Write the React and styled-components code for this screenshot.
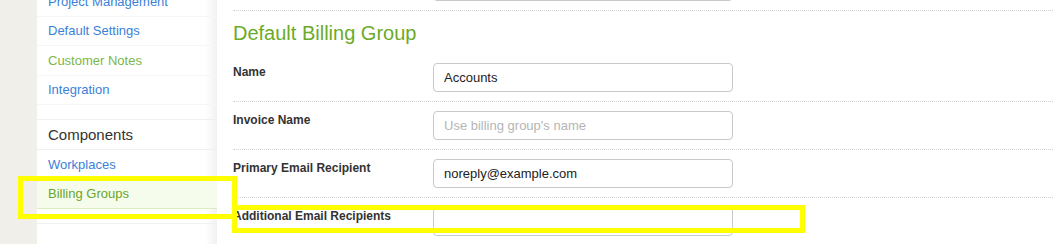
import styled, { createGlobalStyle } from "styled-components";

const GlobalStyle = createGlobalStyle`
  html, body {
    margin: 0;
    padding: 0;
    background: #f0efe9;
    font-family: "Liberation Sans", Arial, sans-serif;
  }
`;

const Viewport = styled.div`
  position: relative;
  height: 244px;
  overflow: hidden;
`;

const Page = styled.div`
  display: flex;
  margin-top: -37px;
  min-height: 300px;
`;

const Backdrop = styled.div`
  width: 37px;
  flex-shrink: 0;
  background: #f0efe9;
`;

const Sidebar = styled.nav`
  width: 180px;
  flex-shrink: 0;
  padding-top: 24px;
  background: linear-gradient(to right, #fff calc(100% - 12px), #f1f1f1);
`;

const NavItem = styled.a`
  display: flex;
  align-items: center;
  height: 28.5px;
  padding-left: 11px;
  font-size: 13px;
  text-decoration: none;
  color: ${(p) => (p.$visited ? "#7ab648" : "#3b7fd9")};
  border-bottom: 1px solid #f6f6f6;
`;

const ActiveItem = styled(NavItem)`
  color: #6aa52a;
  background: #f6fcec;
  border-bottom: 1px solid #d9efbd;
`;

const NavHeading = styled.div`
  display: flex;
  align-items: center;
  height: 29px;
  margin-top: 14px;
  padding-left: 11px;
  font-size: 15px;
  color: #333;
  border-top: 1px solid #f0f0f0;
  border-bottom: 1px solid #f0f0f0;
`;

const NavSpacer = styled.div`
  height: 14px;
  border-bottom: 1px solid #f0f0f0;
`;

const Main = styled.main`
  flex: 1;
  background: #fff;
  padding-left: 16px;
`;

const Row = styled.div`
  display: grid;
  grid-template-columns: 200px 300px;
  align-items: start;
  padding: 9px 0;
  border-bottom: 1px dotted #d0d0d0;
`;

const Label = styled.label`
  font-size: 12px;
  font-weight: bold;
  line-height: 18px;
  color: #333;
`;

const Input = styled.input`
  box-sizing: border-box;
  width: 300px;
  height: 29px;
  padding: 0 10px;
  border: 1px solid #c6cacd;
  border-radius: 4px;
  font-family: "Liberation Sans", Arial, sans-serif;
  font-size: 13px;
  color: #222;
  outline: none;

  &::placeholder {
    color: #b5b5b5;
  }
`;

const SectionTitle = styled.h2`
  margin: 0;
  height: 43px;
  padding-top: 10px;
  box-sizing: border-box;
  font-size: 20px;
  font-weight: normal;
  line-height: 24px;
  color: #6aab28;
`;

const Highlight = styled.div`
  position: absolute;
  box-sizing: border-box;
  border: 5px solid #ffff00;
  pointer-events: none;
`;

const fields = [
  { label: "Name", value: "Accounts" },
  { label: "Invoice Name", placeholder: "Use billing group's name" },
  { label: "Primary Email Recipient", value: "noreply@example.com" },
  { label: "Additional Email Recipients" },
];

export default function App() {
  return (
    <Viewport>
      <GlobalStyle />
      <Page>
        <Backdrop />
        <Sidebar>
          <NavItem href="#">Project Management</NavItem>
          <NavItem href="#">Default Settings</NavItem>
          <NavItem href="#" $visited>
            Customer Notes
          </NavItem>
          <NavItem href="#">Integration</NavItem>
          <NavHeading>Components</NavHeading>
          <NavItem href="#">Workplaces</NavItem>
          <ActiveItem href="#">Billing Groups</ActiveItem>
          <NavSpacer />
        </Sidebar>
        <Main>
          <Row>
            <Label />
            <Input readOnly />
          </Row>
          <SectionTitle>Default Billing Group</SectionTitle>
          {fields.map((f) => (
            <Row key={f.label}>
              <Label>{f.label}</Label>
              <Input
                readOnly
                defaultValue={f.value}
                placeholder={f.placeholder}
              />
            </Row>
          ))}
        </Main>
      </Page>
      <Highlight style={{ left: 18, top: 176, width: 219, height: 43 }} />
      <Highlight style={{ left: 232, top: 205, width: 573, height: 28 }} />
    </Viewport>
  );
}
